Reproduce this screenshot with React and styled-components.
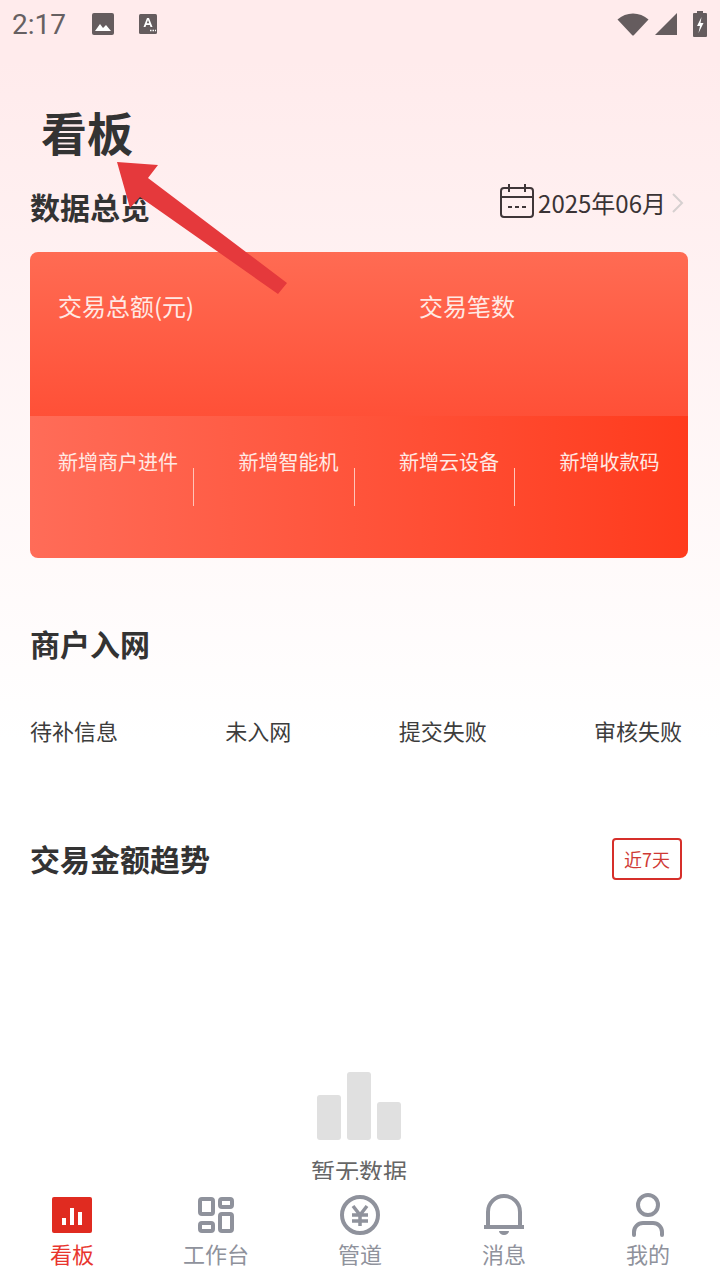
import styled, { createGlobalStyle } from "styled-components";

const GlobalStyle = createGlobalStyle`
  html, body {
    margin: 0;
    padding: 0;
    background: #fff;
  }
  * {
    box-sizing: border-box;
  }
`

const Page = styled.div`
  position: relative;
  width: 720px;
  height: 1280px;
  overflow: hidden;
  display: flex;
  flex-direction: column;
  font-family: "Noto Sans CJK SC", "Noto Sans", sans-serif;
  color: #333;
  background: linear-gradient(180deg, #ffebec 0, #ffebec 60px, #fff 740px);
`

const StatusBar = styled.div`
  height: 48px;
  flex: none;
  display: flex;
  align-items: center;
  padding: 0 13px 0 12px;
`

const Time = styled.span`
  font-family: Roboto, sans-serif;
  font-size: 28px;
  color: #666062;
  width: 79px;
`

const StatusGroup = styled.div`
  display: flex;
  align-items: center;
  gap: ${(p) => p.$gap}px;
  margin-left: ${(p) => (p.$right ? "auto" : "0")};
`

const StatusSpacer = styled.span`
  width: 4px;
`

const Main = styled.main`
  flex: 1;
  min-height: 0;
  overflow: hidden;
`

const PageTitle = styled.h1`
  margin: 53px 0 0;
  padding-left: 41px;
  height: 60px;
  line-height: 60px;
  font-size: 46px;
  font-weight: 700;
`

const SectionHead = styled.div`
  height: 44px;
  margin-top: ${(p) => p.$top}px;
  padding: 0 38px 0 30px;
  display: flex;
  align-items: center;
  justify-content: space-between;
`

const SectionTitle = styled.h2`
  margin: 0;
  font-size: 30px;
  line-height: 44px;
  font-weight: 700;
`

const DatePicker = styled.div`
  display: flex;
  align-items: center;
  font-size: 24px;
  margin: -6px -3px 0 0;
  color: #3a3335;
  svg:first-child {
    margin-top: -4px;
  }
`

const DateText = styled.span`
  margin: 0 5px 0 4px;
  line-height: 44px;
`

const Card = styled.section`
  margin: 24px 32px 0 30px;
  height: 306px;
  border-radius: 8px;
  overflow: hidden;
  color: #ffe9e4;
  display: flex;
  flex-direction: column;
`

const CardTop = styled.div`
  height: 164px;
  padding: 37px 0 0 28px;
  display: grid;
  grid-template-columns: 361px 1fr;
  align-content: start;
  font-size: 24px;
  line-height: 34px;
  background: linear-gradient(180deg, #ff6b53, #ff5037);
`

const CardBottom = styled.div`
  flex: 1;
  padding: 31px 12.5px 0 3.5px;
  display: grid;
  grid-template-columns: repeat(4, 1fr);
  align-content: start;
  background: linear-gradient(90deg, #ff6c58, #ff3b1d);
`

const StatCell = styled.div`
  display: flex;
  justify-content: flex-end;
`

const StatLabel = styled.span`
  font-size: 20px;
  line-height: 30px;
  padding-right: 15px;
`

const StatDivider = styled.i`
  width: 1px;
  height: 38px;
  margin-top: 21px;
  background: ${(p) => (p.$hidden ? "transparent" : "#ffc5b9")};
`

const StatusRow = styled.div`
  margin-top: 50px;
  padding: 0 38px 0 30px;
  display: flex;
  justify-content: space-between;
  font-size: 22px;
  line-height: 30px;
  color: #3c3c3c;
`

const RangeTag = styled.span`
  width: 70px;
  height: 42px;
  margin-top: 2px;
  border: 2px solid #d62f2a;
  border-radius: 4px;
  display: flex;
  align-items: center;
  justify-content: center;
  font-size: 18px;
  color: #cf3a35;
`

const Empty = styled.div`
  margin-top: 192px;
  margin-left: -2px;
  display: flex;
  flex-direction: column;
  align-items: center;
`

const EmptyBars = styled.div`
  height: 68px;
  display: flex;
  align-items: flex-end;
  gap: 6px;
`

const EmptyBar = styled.i`
  width: 24px;
  height: ${(p) => p.$h}px;
  border-radius: 3px;
  background: #e0e0e0;
`

const EmptyText = styled.span`
  margin-top: 13px;
  font-size: 24px;
  line-height: 36px;
  color: #666;
`

const TabBar = styled.nav`
  height: 100px;
  flex: none;
  display: grid;
  grid-template-columns: repeat(5, 144px);
  background: #fff;
`

const Tab = styled.div`
  display: flex;
  flex-direction: column;
  align-items: center;
  color: ${(p) => (p.$active ? "#e8352e" : "#8f929c")};
`

const TabIcon = styled.div`
  height: 40px;
  margin-top: 15px;
  display: flex;
  align-items: center;
  justify-content: center;
`

const TabLabel = styled.span`
  margin-top: 1px;
  font-size: 22px;
  line-height: 34px;
`

const ArrowOverlay = styled.svg`
  position: absolute;
  left: 100px;
  top: 150px;
  pointer-events: none;
`

const ImageIcon = () => (
  <svg width="24" height="24" viewBox="0 0 24 24">
    <rect x="1" y="1" width="22" height="22" rx="2" fill="#655c5e" />
    <path d="M4 19l5-7 3 4 3-3 5 6z" fill="#fff" />
  </svg>
)

const FontIcon = () => (
  <svg width="20" height="22" viewBox="0 0 20 22">
    <rect x="1" y="1" width="18" height="20" rx="1.5" fill="#655c5e" />
    <path d="M5.5 14L9 5h2l3.500 9h-2l-.7-2H8.200l-.7 2zM8.800 10.300h2.400L10 7z" fill="#fff" />
    <path d="M12 17.500h1.500M14.500 17.500H16M17 17.500h1" stroke="#fff" strokeWidth="1.500" />
  </svg>
)

const WifiIcon = () => (
  <svg width="32" height="24" viewBox="0 0 32 24">
    <path d="M0.500 7.500C9 -0.500 23 -0.500 31.500 7.500L17 23a1.400 1.400 0 0 1-2 0z" fill="#655c5e" />
  </svg>
)

const SignalIcon = () => (
  <svg width="22" height="22" viewBox="0 0 22 22">
    <path d="M22 0v22H0z" fill="#655c5e" />
  </svg>
)

const BatteryIcon = () => (
  <svg width="14" height="26" viewBox="0 0 14 26">
    <path d="M4 0h6v2h3a1 1 0 0 1 1 1v22a1 1 0 0 1-1 1H1a1 1 0 0 1-1-1V3a1 1 0 0 1 1-1h3z" fill="#655c5e" />
    <path d="M8.500 6L4 15h3l-1.500 7L10.500 12H7.500z" fill="#fff" />
  </svg>
)

const CalendarIcon = () => (
  <svg width="34" height="36" viewBox="0 0 34 36" fill="none" stroke="#3f3638" strokeWidth="2">
    <rect x="1" y="5" width="32" height="29" rx="3" />
    <path d="M1 14h32M9 1v8M25 1v8" />
    <path d="M8 24h4M15 24h4M22 24h4" />
  </svg>
)

const ChevronIcon = () => (
  <svg width="14" height="22" viewBox="0 0 14 22" fill="none" stroke="#d6d0d0" strokeWidth="2">
    <path d="M2 2l9 9-9 9" />
  </svg>
)

const BoardIcon = () => (
  <svg width="40" height="36" viewBox="0 0 40 36">
    <rect width="40" height="36" rx="2" fill="#e02b20" />
    <path d="M10 21h4v7h-4zM18 11h4v17h-4zM26 15h4v13h-4z" fill="#fff" />
  </svg>
)

const WorkIcon = () => (
  <svg width="36" height="36" viewBox="0 0 36 36" fill="none" stroke="#8f929c" strokeWidth="4">
    <rect x="2" y="2" width="13" height="15" rx="2" />
    <rect x="22" y="2" width="12" height="8" rx="2" />
    <rect x="2" y="26" width="13" height="8" rx="2" />
    <rect x="22" y="17" width="12" height="17" rx="2" />
  </svg>
)

const YenIcon = () => (
  <svg width="40" height="40" viewBox="0 0 40 40" fill="none" stroke="#8f929c">
    <circle cx="20" cy="20" r="18" strokeWidth="4" />
    <path d="M13 11l7 9 7-9M12 20h16M12 26h16M20 20v11" strokeWidth="3.500" />
  </svg>
)

const BellIcon = () => (
  <svg width="40" height="44" viewBox="0 0 40 44" fill="none">
    <path d="M4 34V19a16 16 0 0 1 32 0v15" stroke="#8f929c" strokeWidth="4" />
    <rect y="32" width="40" height="4" fill="#8f929c" />
    <path d="M15 38h10a5 4 0 0 1-10 0z" fill="#8f929c" />
  </svg>
)

const UserIcon = () => (
  <svg width="34" height="44" viewBox="0 0 34 44" fill="none" stroke="#8f929c" strokeWidth="4">
    <circle cx="17" cy="12" r="10" />
    <path d="M3 42v-3a9 9 0 0 1 9-9h10a9 9 0 0 1 9 9v3" strokeLinecap="round" />
  </svg>
)

const stats = ["新增商户进件", "新增智能机", "新增云设备", "新增收款码"]
const statuses = ["待补信息", "未入网", "提交失败", "审核失败"]
const barHeights = [45, 68, 38]
const tabs = [
  { label: "看板", icon: <BoardIcon />, active: true },
  { label: "工作台", icon: <WorkIcon /> },
  { label: "管道", icon: <YenIcon /> },
  { label: "消息", icon: <BellIcon /> },
  { label: "我的", icon: <UserIcon /> },
]

const App = () => {
  return (
    <Page>
      <GlobalStyle />
      <StatusBar>
        <Time>2:17</Time>
        <StatusGroup $gap={23}>
          <ImageIcon />
          <FontIcon />
        </StatusGroup>
        <StatusGroup $gap={6} $right>
          <WifiIcon />
          <SignalIcon />
          <StatusSpacer />
          <BatteryIcon />
        </StatusGroup>
      </StatusBar>

      <Main>
        <PageTitle>看板</PageTitle>

        <SectionHead $top={23}>
          <SectionTitle>数据总览</SectionTitle>
          <DatePicker>
            <CalendarIcon />
            <DateText>2025年06月</DateText>
            <ChevronIcon />
          </DatePicker>
        </SectionHead>

        <Card>
          <CardTop>
            <span>交易总额(元)</span>
            <span>交易笔数</span>
          </CardTop>
          <CardBottom>
            {stats.map((s, i) => (
              <StatCell key={s}>
                <StatLabel>{s}</StatLabel>
                <StatDivider $hidden={i === stats.length - 1} />
              </StatCell>
            ))}
          </CardBottom>
        </Card>

        <SectionHead $top={63}>
          <SectionTitle>商户入网</SectionTitle>
        </SectionHead>
        <StatusRow>
          {statuses.map((s) => (
            <span key={s}>{s}</span>
          ))}
        </StatusRow>

        <SectionHead $top={91}>
          <SectionTitle>交易金额趋势</SectionTitle>
          <RangeTag>近7天</RangeTag>
        </SectionHead>

        <Empty>
          <EmptyBars>
            {barHeights.map((h, i) => (
              <EmptyBar key={i} $h={h} />
            ))}
          </EmptyBars>
          <EmptyText>暂无数据</EmptyText>
        </Empty>
      </Main>

      <TabBar>
        {tabs.map((t) => (
          <Tab key={t.label} $active={t.active}>
            <TabIcon>{t.icon}</TabIcon>
            <TabLabel>{t.label}</TabLabel>
          </Tab>
        ))}
      </TabBar>

      <ArrowOverlay width="200" height="150" viewBox="0 0 200 150">
        <path d="M17 12L58 15 48 28 187 133 178 144 40 47 30 58z" fill="#e5393c" />
      </ArrowOverlay>
    </Page>
  )
}

export default App
